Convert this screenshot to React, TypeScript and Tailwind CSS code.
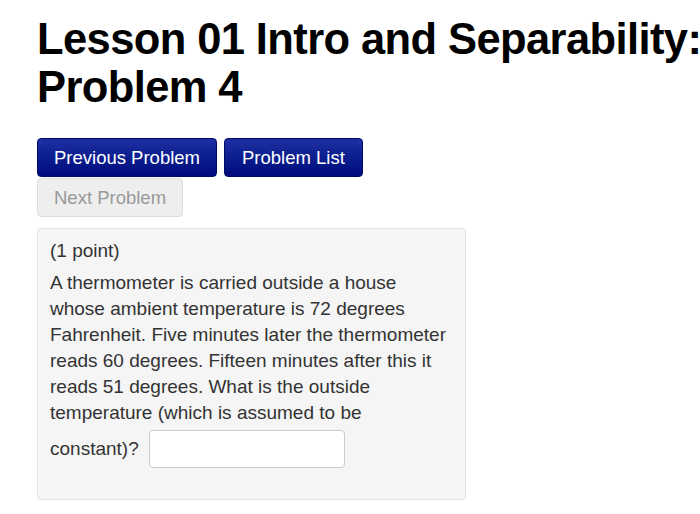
export default function App() {
  return (
    <div className="min-h-screen w-[700px] overflow-hidden bg-white pl-[37px] pt-[15px] font-['Liberation_Sans',Arial,sans-serif] text-[#333]">
      <h1 className="whitespace-nowrap text-[43.5px] font-bold leading-[48px] tracking-[-0.6px] text-black">
        Lesson 01 Intro and Separability:
        <br />
        Problem 4
      </h1>

      <div className="mt-[27px] flex w-[340px] flex-wrap gap-x-[7px] gap-y-[1px]">
        <button className="h-[39px] rounded-[4px] border border-[#000a6a] bg-gradient-to-b from-[#1d2fa2] to-[#00097c] px-[16px] text-[18.5px] text-white">
          Previous Problem
        </button>
        <button className="h-[39px] rounded-[4px] border border-[#000a6a] bg-gradient-to-b from-[#1d2fa2] to-[#00097c] px-[17px] text-[18.5px] text-white">
          Problem List
        </button>
        <button className="h-[39px] rounded-[4px] border border-[#dddddd] bg-[#eeeeee] px-[16px] text-[18.5px] text-[#999]">
          Next Problem
        </button>
      </div>

      <div className="mt-[11px] h-[272px] w-[429px] rounded-[4px] border border-[#e3e3e3] bg-[#f5f5f5] px-[12px] pt-[9px] text-[19px] leading-[26px] text-[#333]">
        <p>(1 point)</p>
        <p className="mt-[6px] whitespace-nowrap">
          A thermometer is carried outside a house
          <br />
          whose ambient temperature is 72 degrees
          <br />
          Fahrenheit. Five minutes later the thermometer
          <br />
          reads 60 degrees. Fifteen minutes after this it
          <br />
          reads 51 degrees. What is the outside
          <br />
          temperature (which is assumed to be
        </p>
        <div className="mt-[4px] flex items-center gap-[10px]">
          <span>constant)?</span>
          <input
            type="text"
            className="h-[38px] w-[196px] rounded-[4px] border border-[#cccccc] bg-white"
          />
        </div>
      </div>
    </div>
  )
}
